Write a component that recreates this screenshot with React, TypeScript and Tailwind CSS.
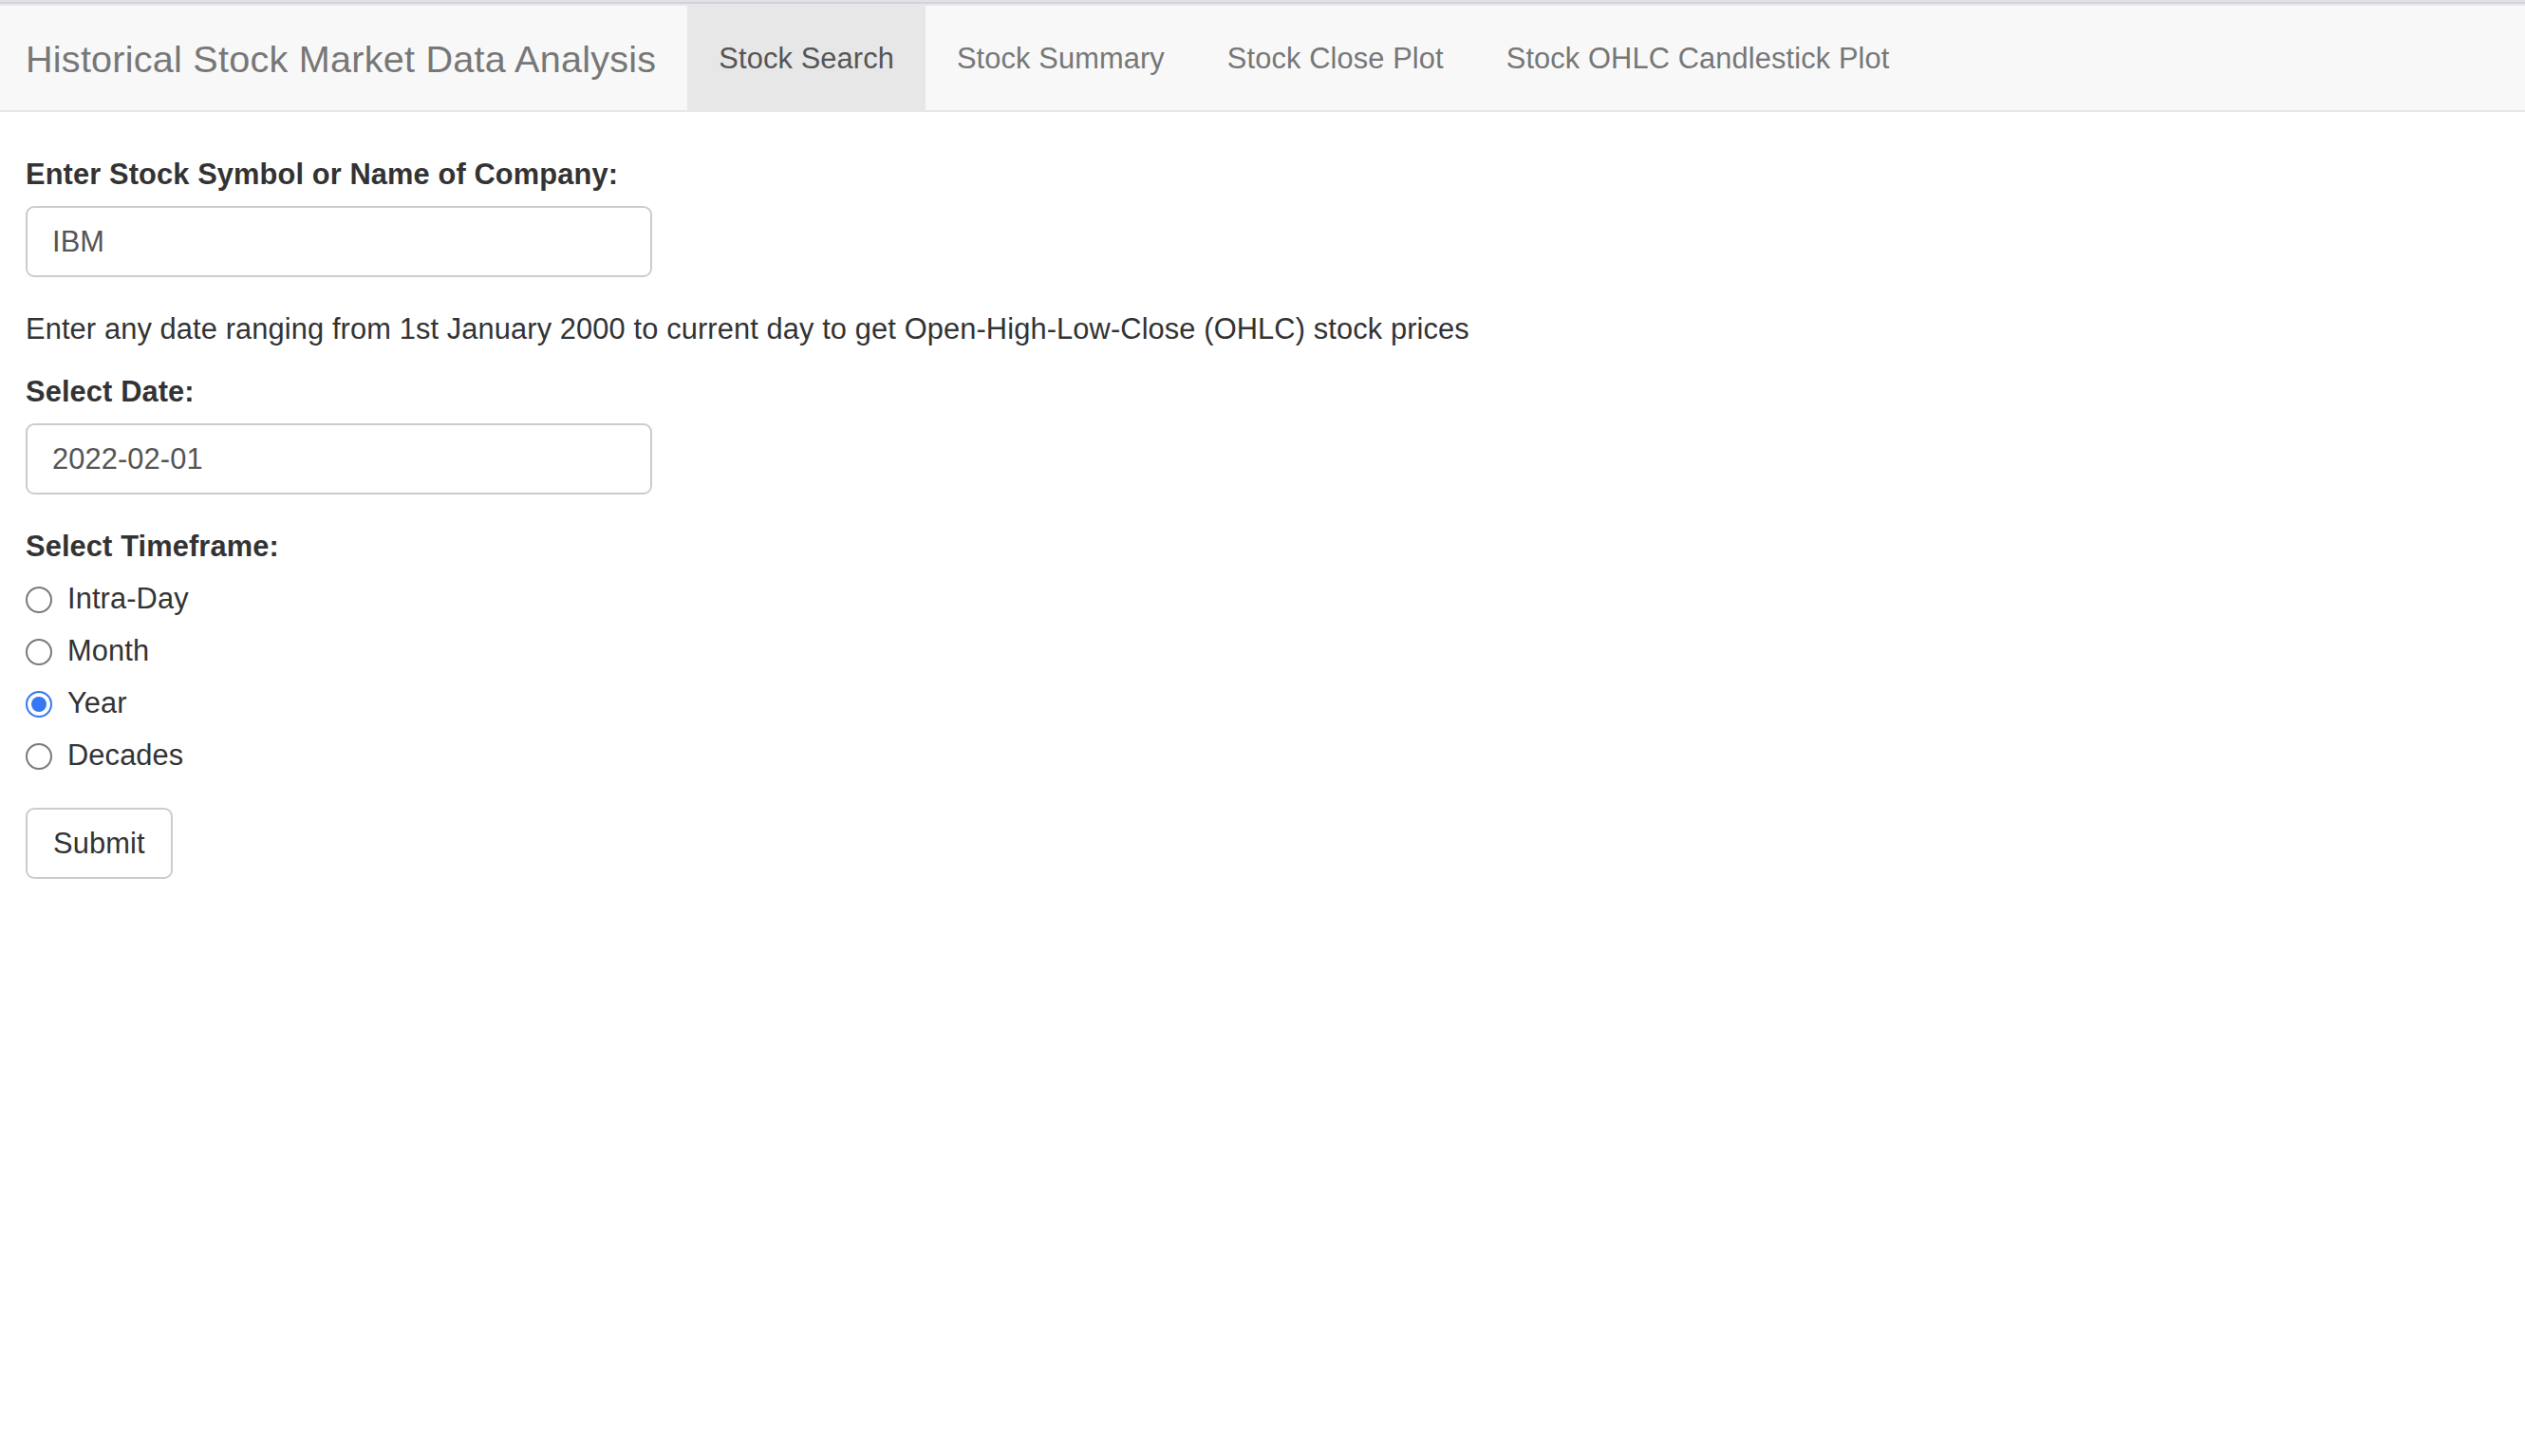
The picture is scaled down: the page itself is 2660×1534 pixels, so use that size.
import { useState } from 'react';

const tabs = ['Stock Search', 'Stock Summary', 'Stock Close Plot', 'Stock OHLC Candlestick Plot'];
const timeframes = ['Intra-Day', 'Month', 'Year', 'Decades'];

const Radio = ({ checked }: { checked: boolean }) =>
    checked ? (
        <span className="mt-[2px] flex h-[28px] w-[28px] shrink-0 items-center justify-center rounded-full border-[2.5px] border-[#3478f6] bg-white">
            <span className="h-[16px] w-[16px] rounded-full bg-[#3478f6]" />
        </span>
    ) : (
        <span className="mt-[2px] h-[28px] w-[28px] shrink-0 rounded-full border-[2.5px] border-[#7a7a7a] bg-white" />
    );

export default function App() {
    const [active, setActive] = useState<string>('Stock Search');
    const [timeframe, setTimeframe] = useState<string>('Year');

    return (
        <div className="min-h-screen bg-white font-['Liberation_Sans','Helvetica_Neue',Arial,sans-serif] text-[30.8px] leading-[44px] tracking-[0.12px] text-[#333]">
            {/* browser edge */}
            <div className="h-[2px] bg-[#e2e2e6]" />
            <div className="h-[2px] bg-[#d3d3d7]" />
            <div className="h-[2px] bg-[#e7e7eb]" />

            <nav className="flex h-[112px] border-b-[2px] border-[#e7e7e7] bg-[#f8f8f8]">
                <span className="pl-[27px] pr-[33px] pt-[2px] text-[39.6px] leading-[108px] tracking-[0.24px] text-[#777]">
                    Historical Stock Market Data Analysis
                </span>
                <ul className="flex">
                    {tabs.map((tab) => (
                        <li key={tab}>
                            <button
                                onClick={() => setActive(tab)}
                                className={
                                    active === tab
                                        ? 'h-[110px] bg-[#e7e7e7] px-[33px] pt-[2px] text-[#555]'
                                        : 'h-[110px] px-[33px] pt-[2px] text-[#777]'
                                }
                            >
                                {tab}
                            </button>
                        </li>
                    ))}
                </ul>
            </nav>

            <main className="pl-[27px] pt-[44px]">
                <div className="mb-[33px]">
                    <label className="mb-[11px] block font-bold">Enter Stock Symbol or Name of Company:</label>
                    <input
                        readOnly
                        value="IBM"
                        className="h-[75px] w-[660px] rounded-[9px] border-[2px] border-[#ccc] bg-white px-[26px] text-[#555] outline-none"
                    />
                </div>

                <p className="mb-[22px]">
                    Enter any date ranging from 1st January 2000 to current day to get Open-High-Low-Close (OHLC) stock prices
                </p>

                <div className="mb-[33px]">
                    <label className="mb-[11px] block font-bold">Select Date:</label>
                    <input
                        readOnly
                        value="2022-02-01"
                        className="h-[75px] w-[660px] rounded-[9px] border-[2px] border-[#ccc] bg-white px-[26px] text-[#555] outline-none"
                    />
                </div>

                <div className="mb-[33px]">
                    <label className="mb-[11px] block font-bold">Select Timeframe:</label>
                    <div className="flex flex-col gap-[11px]">
                        {timeframes.map((t) => (
                            <label key={t} onClick={() => setTimeframe(t)} className="flex h-[44px] cursor-pointer items-center gap-[16px]">
                                <Radio checked={timeframe === t} />
                                <span>{t}</span>
                            </label>
                        ))}
                    </div>
                </div>

                <button className="h-[75px] rounded-[9px] border-[2px] border-[#ccc] bg-white px-[27px] text-[#333]">
                    Submit
                </button>
            </main>
        </div>
    );
}
